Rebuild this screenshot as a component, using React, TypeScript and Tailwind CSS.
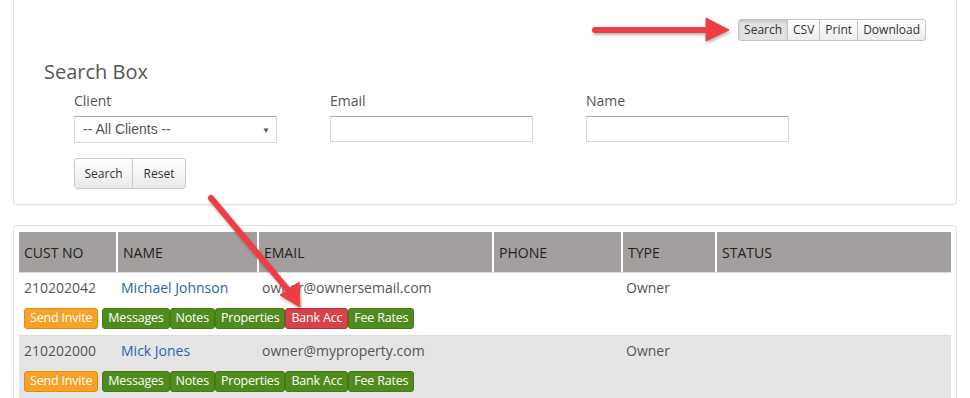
import React from 'react';

type Customer = {
  custNo: string;
  name: string;
  email: string;
  phone: string;
  type: string;
  status: string;
  highlightBank?: boolean;
};

const customers: Customer[] = [
  { custNo: '210202042', name: 'Michael Johnson', email: 'owner@ownersemail.com', phone: '', type: 'Owner', status: '', highlightBank: true },
  { custNo: '210202000', name: 'Mick Jones', email: 'owner@myproperty.com', phone: '', type: 'Owner', status: '' },
];

const columns = [
  { label: 'CUST NO', w: 'w-[97px]' },
  { label: 'NAME', w: 'w-[141px]' },
  { label: 'EMAIL', w: 'w-[235px]' },
  { label: 'PHONE', w: 'w-[129px]' },
  { label: 'TYPE', w: 'w-[94px]' },
  { label: 'STATUS', w: 'flex-1' },
];

function ToolButton({ label, active, first, last }: { label: string; active?: boolean; first?: boolean; last?: boolean }) {
  return (
    <button
      className={`h-[22px] px-[5px] text-[12px] text-[#333] border border-[#c4c4c4] -ml-px ${
        active
          ? 'bg-[#e2e2e2] shadow-[inset_0_2px_3px_rgba(0,0,0,0.12)]'
          : 'bg-gradient-to-b from-white to-[#ececec]'
      } ${first ? 'rounded-l-[3px] ml-0' : ''} ${last ? 'rounded-r-[3px]' : ''}`}
    >
      {label}
    </button>
  );
}

function ActionButton({ label, color }: { label: string; color: 'orange' | 'green' | 'red' }) {
  const cls =
    color === 'orange'
      ? 'bg-[#f7a227] border-[#e08e12]'
      : color === 'red'
      ? 'bg-[#d8434a] border-[#bb2f36]'
      : 'bg-[#4f8c1c] border-[#447a16]';
  return (
    <button className={`h-[21px] px-[5px] text-[12.5px] leading-none text-white border rounded-[3px] tracking-[-0.2px] ${cls}`}>
      {label}
    </button>
  );
}

function Field({ label, select }: { label: string; select?: boolean }) {
  return (
    <div className="w-[256px] flex flex-col">
      <label className="text-[14px] text-[#555] leading-[20px] mb-[5px]">{label}</label>
      {select ? (
        <div className="w-[203px] h-[27px] border border-[#d5d8e0] border-t-[#a9a9b5] bg-white flex items-center justify-between pl-[8px] pr-[6px]">
          <span className="text-[14px] text-[#555]" style={{ fontFamily: '"Liberation Sans", Arial, sans-serif' }}>-- All Clients --</span>
          <span className="text-[8px] text-[#555]">▼</span>
        </div>
      ) : (
        <div className="w-[203px] h-[26px] border border-[#d5d8e0] border-t-[#a9a9b5] bg-white" />
      )}
    </div>
  );
}

export default function App() {
  return (
    <div className="relative w-[970px] h-[398px] overflow-hidden bg-white" style={{ fontFamily: '"Open Sans", "Noto Sans", sans-serif' }}>
      <div className="pl-[13px] pr-[13px]">
        {/* Search panel */}
        <div className="border border-t-0 border-[#e3e3e3] rounded-b-[4px] h-[205px] pt-[19px] pl-[30px] pr-[30px] shadow-[0_1px_1px_rgba(0,0,0,0.04)]">
          <div className="flex justify-end">
            <div className="flex">
              <ToolButton label="Search" active first />
              <ToolButton label="CSV" />
              <ToolButton label="Print" />
              <ToolButton label="Download" last />
            </div>
          </div>
          <h2 className="text-[20px] leading-[28px] text-[#555] mt-[17px]">Search Box</h2>
          <div className="pl-[30px] mt-[5px]">
            <div className="flex">
              <Field label="Client" select />
              <Field label="Email" />
              <Field label="Name" />
            </div>
            <div className="flex mt-[15px]">
              <button className="h-[31px] w-[59px] text-[12px] text-[#333] border border-[#c9c9c9] rounded-l-[3px] bg-gradient-to-b from-white to-[#e9e9e9]">Search</button>
              <button className="h-[31px] w-[54px] -ml-px text-[12px] text-[#333] border border-[#c9c9c9] rounded-r-[3px] bg-gradient-to-b from-white to-[#e9e9e9]">Reset</button>
            </div>
          </div>
        </div>

        {/* Results panel */}
        <div className="mt-[20px] border border-b-0 border-[#e3e3e3] rounded-t-[4px] px-[5px] pt-[6px]">
          <div className="flex bg-[#a39f9e] h-[40px]">
            {columns.map((c, i) => (
              <div
                key={c.label}
                className={`${c.w} flex items-center pl-[5px] text-[14px] text-[#222] ${i > 0 ? 'border-l-2 border-white' : ''}`}
              >
                {c.label}
              </div>
            ))}
          </div>
          {customers.map((cu, idx) => (
            <div key={cu.custNo} className={`h-[63px] ${idx % 2 === 1 ? 'bg-[#e5e5e5]' : 'bg-white'} border-t border-[#dcdcdc]`}>
              <div className="flex h-[29px] items-center text-[14px] text-[#555]">
                <div className="w-[97px] pl-[5px]">{cu.custNo}</div>
                <div className="w-[141px] pl-[5px] text-[#2a64a8]">{cu.name}</div>
                <div className="w-[235px] pl-[5px]">{cu.email}</div>
                <div className="w-[129px] pl-[5px]">{cu.phone}</div>
                <div className="w-[94px] pl-[5px]">{cu.type}</div>
                <div className="flex-1 pl-[5px]">{cu.status}</div>
              </div>
              <div className="flex pl-[5px] mt-[6px]">
                <ActionButton label="Send Invite" color="orange" />
                <div className="flex ml-[4px]">
                  <ActionButton label="Messages" color="green" />
                  <ActionButton label="Notes" color="green" />
                  <ActionButton label="Properties" color="green" />
                  <ActionButton label="Bank Acc" color={cu.highlightBank ? 'red' : 'green'} />
                  <ActionButton label="Fee Rates" color="green" />
                </div>
              </div>
            </div>
          ))}
        </div>
      </div>

      {/* Annotation arrows */}
      <svg className="absolute inset-0 pointer-events-none" width="970" height="398">
        <defs>
          <filter id="sh" x="-20%" y="-20%" width="140%" height="140%">
            <feDropShadow dx="1" dy="2" stdDeviation="1.5" floodColor="#000" floodOpacity="0.3" />
          </filter>
        </defs>
        <g filter="url(#sh)" fill="#ef3e44" stroke="#ef3e44">
          <line x1="595" y1="30" x2="710" y2="30" strokeWidth="6" strokeLinecap="round" />
          <polygon points="706,18 729,30 706,41" strokeWidth="1" strokeLinejoin="round" />
          <line x1="211" y1="198" x2="288" y2="290" strokeWidth="6" strokeLinecap="round" />
          <polygon points="280,295 300,307 299,282" strokeWidth="1" strokeLinejoin="round" />
        </g>
      </svg>
    </div>
  );
}
